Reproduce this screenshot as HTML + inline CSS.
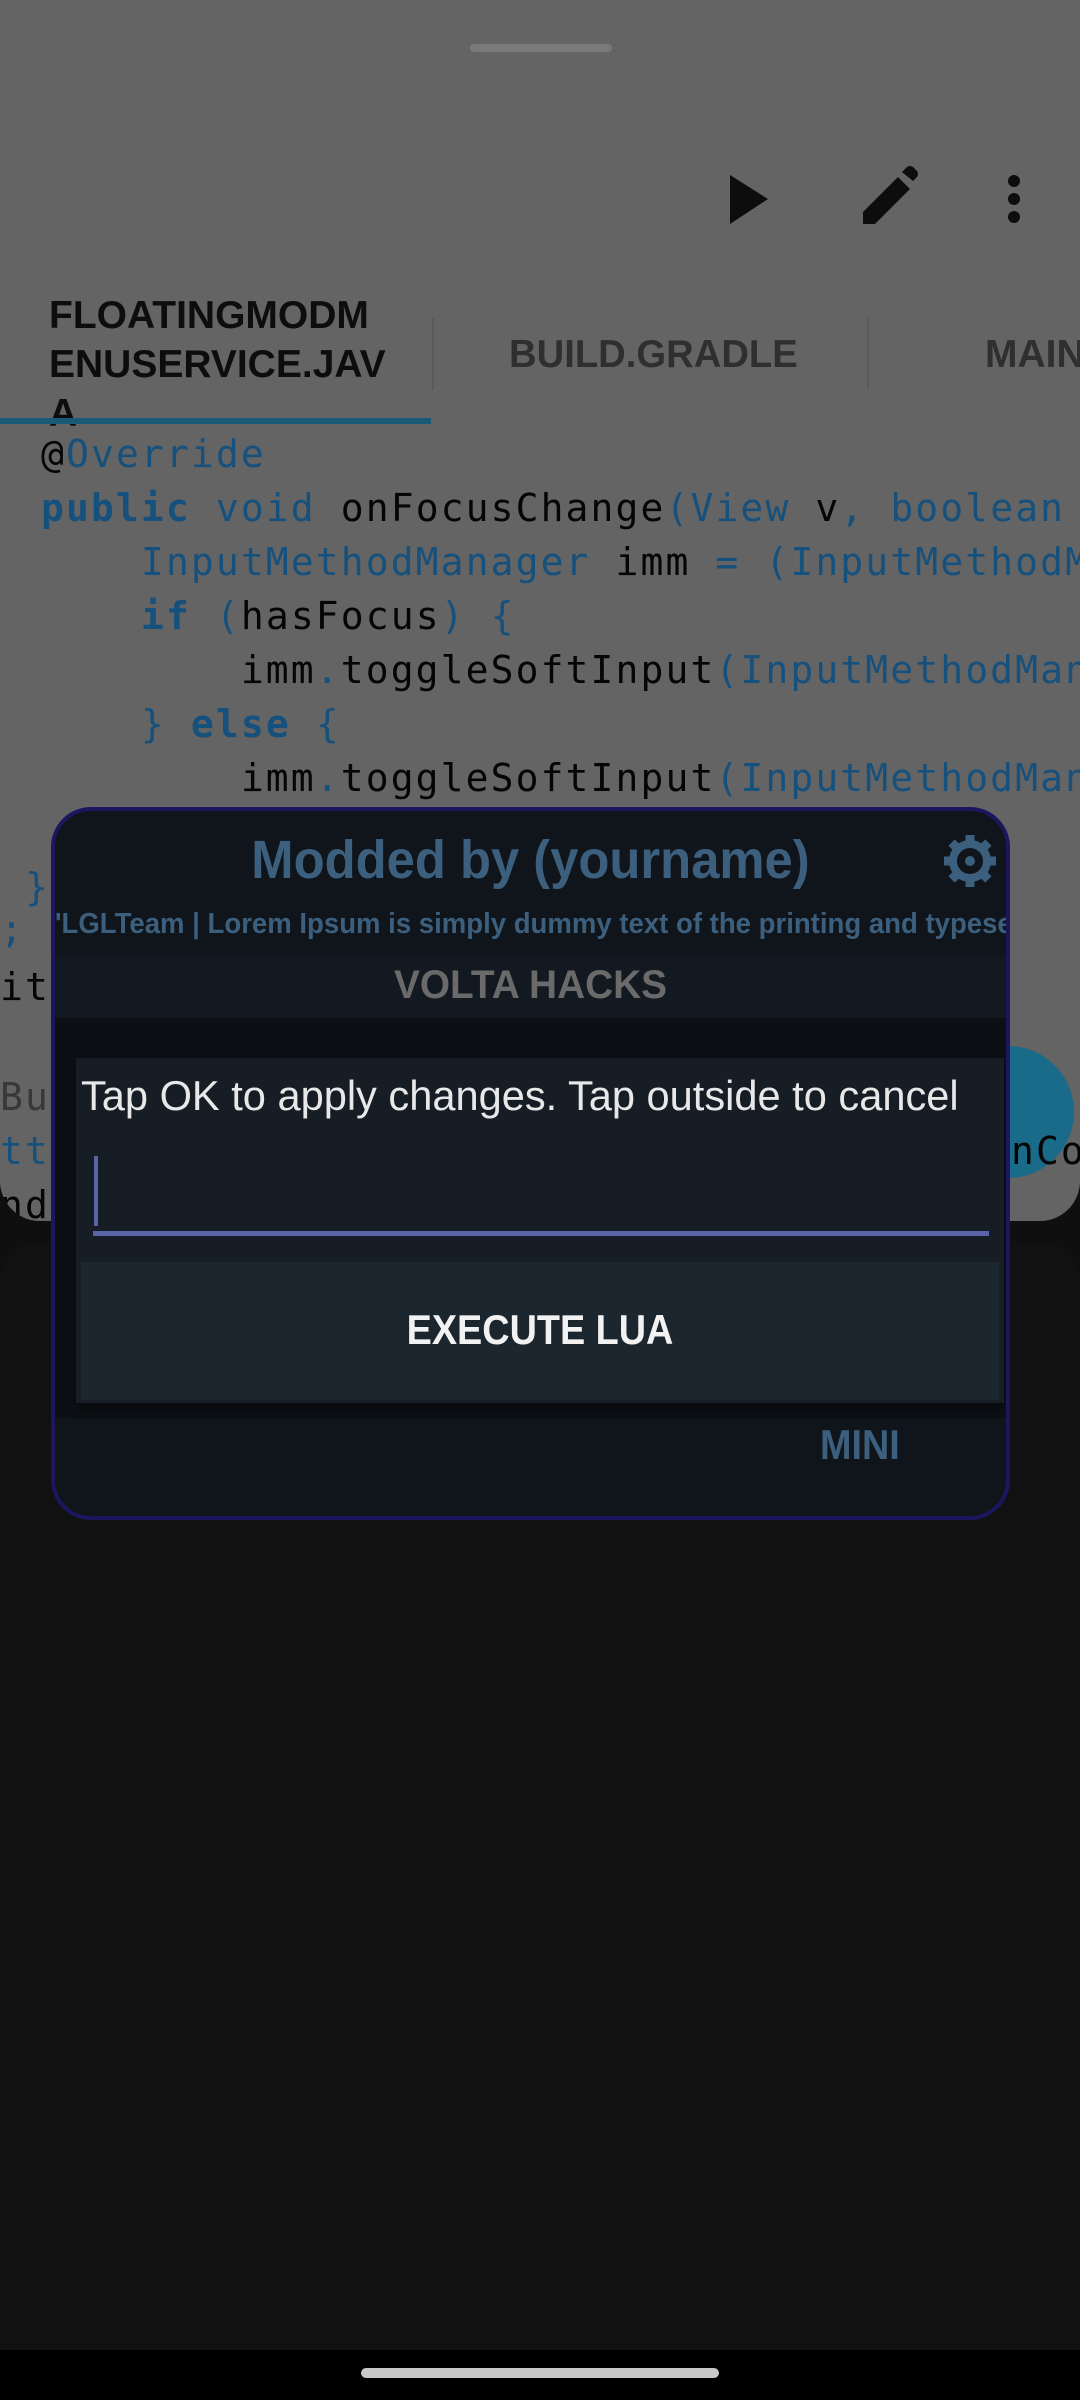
<!DOCTYPE html>
<html><head><meta charset="utf-8">
<style>
*{margin:0;padding:0;box-sizing:border-box}
html,body{width:1080px;height:2400px;overflow:hidden;background:#0f0f0f}
body{position:relative;font-family:"Liberation Sans",sans-serif}
.abs{position:absolute}
.sheet{left:0;top:0;width:1080px;height:1221px;background:#646464;border-radius:0 0 40px 40px;overflow:hidden}
.code{font-family:"DejaVu Sans Mono","Liberation Mono",monospace;font-size:38px;white-space:pre;color:#050505;letter-spacing:2.1px}
.b{color:#16507c}
.k{color:#16507c;font-weight:bold}
.tab{font-weight:bold;font-size:39px;transform-origin:left top;white-space:nowrap}
</style></head><body>
<div class="abs sheet">
  <div class="abs" style="left:470px;top:44px;width:142px;height:8px;border-radius:4px;background:#7a7a7a"></div>
  <svg class="abs" style="left:0;top:0" width="1080" height="260">
    <polygon points="730,175 768,199 730,224" fill="#0d0d0d"/>
    <path d="M863,212 L898,177 L910,189 L875,224 L863,224 Z" fill="#0d0d0d"/>
    <path d="M902,172 L907,167 Q910,165 913,167 L917,171 Q919,174 917,177 L913,181 Z" fill="#0d0d0d"/>
    <circle cx="1014" cy="181" r="6" fill="#0d0d0d"/><circle cx="1014" cy="199" r="6" fill="#0d0d0d"/><circle cx="1014" cy="217" r="6" fill="#0d0d0d"/>
  </svg>
  <div class="abs tab" style="left:49px;top:291px;line-height:49px;color:#0d0d0d;transform:scaleX(1.0)">FLOATINGMODM<br>ENUSERVICE.JAV<br>A</div>
  <div class="abs" style="left:432px;top:318px;width:2px;height:72px;background:#5a5a5a"></div>
  <div class="abs tab" style="left:509px;top:333px;color:#2f2f2f;transform:scaleX(.98)">BUILD.GRADLE</div>
  <div class="abs" style="left:867px;top:318px;width:2px;height:72px;background:#5a5a5a"></div>
  <div class="abs tab" style="left:985px;top:333px;color:#2f2f2f">MAIN</div>
  <div class="abs" style="left:0;top:418px;width:431px;height:6px;background:#1a5a78"></div>
  <div class="abs code" style="left:41px;top:427px;line-height:54px">@<span class="b">Override</span>
<span class="k">public</span> <span class="b">void</span> onFocusChange<span class="b">(View</span> v<span class="b">,</span> <span class="b">boolean</span>
    <span class="b">InputMethodManager</span> imm <span class="b">= (InputMethodManager</span>
    <span class="k">if</span> <span class="b">(</span>hasFocus<span class="b">) {</span>
        imm<span class="b">.</span>toggleSoftInput<span class="b">(InputMethodManager</span>
    <span class="b">}</span> <span class="k">else</span> <span class="b">{</span>
        imm<span class="b">.</span>toggleSoftInput<span class="b">(InputMethodManager</span></div>
  <div class="abs code" style="left:0;top:860px;line-height:54px"><span class="b"> }</span></div>
  <div class="abs code" style="left:0;top:907px"><span class="b">;</span></div>
  <div class="abs code" style="left:0;top:965px">itt</div>
  <div class="abs code" style="left:0;top:1075px;color:#383838">But</div>
  <div class="abs" style="left:942px;top:1046px;width:132px;height:132px;border-radius:50%;background:#1a6a8a"></div>
  <div class="abs code" style="left:0;top:1129px"><span class="b">tto</span></div>
  <div class="abs code" style="left:986px;top:1129px">onCo</div>
  <div class="abs code" style="left:0;top:1183px">ndi</div>
</div>
<div class="abs" style="left:0;top:1242px;width:1080px;height:1120px;background:#111;border-radius:40px 40px 0 0"></div>
<div class="abs" style="left:0;top:2350px;width:1080px;height:50px;background:#000"></div>
<div class="abs" style="left:361px;top:2368px;width:358px;height:10px;border-radius:5px;background:#c8c8c8"></div>

<div class="abs" style="left:51px;top:807px;width:959px;height:713px;border:4px solid #1c1660;border-radius:40px;background:#10151b;overflow:hidden">
  <div class="abs" style="left:0;top:18px;width:951px;text-align:center;font-weight:bold;font-size:54px;color:#3c5f7e;transform:scaleX(.94)">Modded by (yourname)</div>
  <svg class="abs" style="left:887px;top:22px" width="56" height="56" viewBox="-28 -28 56 56">
    <g fill="#3c5f7e">
      <rect x="-4.5" y="-26" width="9" height="52"/>
      <rect x="-4.5" y="-26" width="9" height="52" transform="rotate(45)"/>
      <rect x="-4.5" y="-26" width="9" height="52" transform="rotate(90)"/>
      <rect x="-4.5" y="-26" width="9" height="52" transform="rotate(135)"/>
    </g>
    <circle r="17" fill="none" stroke="#3c5f7e" stroke-width="8"/>
    <circle r="13" fill="#10151b"/>
    <circle r="5" fill="#3c5f7e"/>
  </svg>
  <div class="abs" style="left:0;top:97px;white-space:nowrap;font-weight:bold;font-size:29px;color:#3c5f7e;transform-origin:left top;transform:scaleX(.95)">'LGLTeam | Lorem Ipsum is simply dummy text of the printing and typesetting</div>
  <div class="abs" style="left:0;top:145px;width:951px;height:62px;background:#121920"></div>
  <div class="abs" style="left:0;top:152px;width:951px;text-align:center;font-weight:bold;font-size:40px;color:#6a6a6a;transform:scaleX(.97)">VOLTA HACKS</div>
  <div class="abs" style="left:0;top:207px;width:951px;height:400px;background:#0c1014"></div>
  <div class="abs" style="left:21px;top:247px;width:928px;height:345px;background:#161d24;box-shadow:0 4px 10px rgba(0,0,0,.5)">
    <div class="abs" style="left:5px;top:14px;white-space:nowrap;font-size:42px;color:#e8e8e8;transform-origin:left top;transform:scaleX(.99)">Tap OK to apply changes. Tap outside to cancel</div>
    <div class="abs" style="left:18px;top:98px;width:4px;height:70px;background:#5a64a8"></div>
    <div class="abs" style="left:17px;top:173px;width:896px;height:5px;background:#5a64a8"></div>
    <div class="abs" style="left:5px;top:204px;width:918px;height:138px;background:#1c262e"></div>
    <div class="abs" style="left:5px;top:248px;width:918px;text-align:center;font-size:42px;font-weight:bold;color:#f2f2f2;transform:scaleX(.9)">EXECUTE LUA</div>
  </div>
  <div class="abs" style="left:765px;top:610px;font-size:42px;font-weight:bold;color:#3c5f7e;transform-origin:left top;transform:scaleX(.9)">MINI</div>
</div>
</body></html>
